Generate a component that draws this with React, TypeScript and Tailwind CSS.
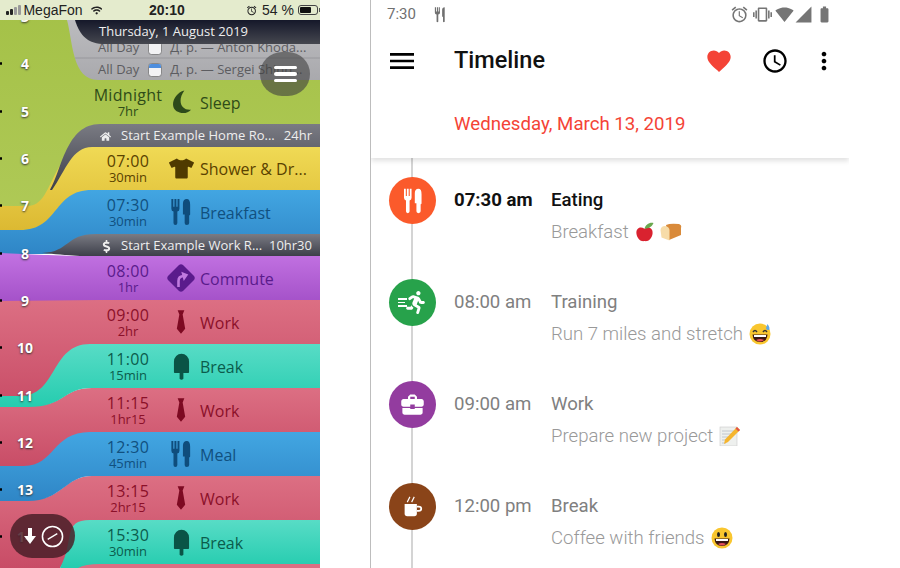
import React from "react";
import { FaDollarSign, FaHome, FaTshirt, FaWifi, FaRunning } from "react-icons/fa";
import { MdAlarm, MdBusinessCenter, MdFavorite, MdMenu, MdMoreVert, MdOutlineAccessTime, MdSignalCellular4Bar, MdSignalWifi4Bar, MdBatteryFull, MdVibration } from "react-icons/md";

const grads: [string, string, string][] = [
  ["green", "#a4c147", "#b0ca58"],
  ["yellow", "#f0da55", "#dcb932"],
  ["blue", "#42a6e2", "#2f86c6"],
  ["purple", "#c272e2", "#a552c9"],
  ["red", "#dc6f83", "#c84c66"],
  ["teal", "#58dcc6", "#25ccaf"],
  ["dark", "#7a7b83", "#3d3f4a"],
  ["black", "#15182a", "#45474f"],
  ["grey", "#bcbcbf", "#a9a9ad"],
];

function Waves() {
  return (
    <svg viewBox="0 0 320 568" className="absolute inset-0 w-[320px] h-[568px]">
      <defs>
        {grads.map(([id, a, b]) => (
          <linearGradient key={id} id={id} x1="0" y1="0" x2="0" y2="1">
            <stop offset="0" stopColor={a} />
            <stop offset="1" stopColor={b} />
          </linearGradient>
        ))}
      </defs>
      <rect width="320" height="240" fill="url(#green)" />
      {/* all-day pills */}
      <path d="M67 20 C73 42 72 80 98 80 H320 V20 Z" fill="url(#grey)" />
      <path d="M75 58 H320" stroke="#98989c" strokeWidth="1" />
      <path d="M75 20 C80 36 88 44 105 44 H320 V20 Z" fill="url(#black)" />
      {/* yellow */}
      <path d="M0 206 H28 C55 206 50 146 92 146 H320 V192 H90 C60 192 60 230 20 230 H0 Z" fill="url(#yellow)" />
      {/* home header */}
      <path d="M50 190 C62 170 66 124 100 124 H320 V147 H92 C72 147 66 170 52 190 Z" fill="url(#dark)" />
      {/* blue */}
      <path d="M0 230 H20 C60 230 52 190 92 190 H320 V236 H100 C70 236 70 254 42 254 H0 Z" fill="url(#blue)" />
      {/* work header */}
      <path d="M42 253 C70 252 65 234 96 234 H320 V256 H80 C65 255 55 254 42 253 Z" fill="url(#dark)" />
      {/* red blocks */}
      <path d="M0 300 H320 V345 H90 L90 388 H60 L40 408 H0 Z" fill="url(#red)" />
      <path d="M0 406 H30 C66 406 62 388 92 388 H320 V433 H90 L60 468 H0 Z" fill="url(#red)" />
      <path d="M0 500 H30 C62 500 65 476 92 476 H320 V521 H90 L60 568 H0 Z" fill="url(#red)" />
      {/* purple */}
      <path d="M0 253 C30 254 60 256 80 256 H320 V300 H100 L0 301 Z" fill="url(#purple)" />
      {/* teal 1 */}
      <path d="M0 396 H20 C58 396 50 344 90 344 H320 V388 H92 C62 388 66 407 28 407 H0 Z" fill="url(#teal)" />
      {/* blue 2 */}
      <path d="M0 466 H24 C55 466 52 432 90 432 H320 V476 H92 C65 476 62 501 28 501 H0 Z" fill="url(#blue)" />
      {/* teal 2 */}
      <path d="M60 568 C75 540 62 520 90 520 H320 V568 H60 Z" fill="url(#teal)" />
      <path d="M78 568 Q85 564 100 564 H320 V568 Z" fill="#dc6f83" />
    </svg>
  );
}

function Cutlery({ className }: { className: string }) {
  return (
    <svg viewBox="0 0 20 27" className={className} fill="currentColor">
      <path d="M0 0 H2 V8 H3.200 V0 H5.200 V8 H6.400 V0 H8.400 V10 Q8.400 12.500 6.200 13 V25 Q6.200 27 4.200 27 Q2.200 27 2.200 25 V13 Q0 12.500 0 10 Z" />
      <path d="M12 16 V5 Q12 0 16 0 Q19.500 0 19.500 6 V16 Q19.500 17 18.500 17 V25 Q18.500 27 16 27 Q13.800 27 13.800 25 V16 Z" />
    </svg>
  );
}
function Tie({ color }: { color: string }) {
  return (
    <svg viewBox="0 0 12 28" className="w-[10px] h-[28px]" fill={color}>
      <path d="M2 0 H10 L8 5 L11 22 L6 28 L1 22 L4 5 Z" />
    </svg>
  );
}
function Pop({ color }: { color: string }) {
  return (
    <svg viewBox="0 0 18 28" className="w-[17px] h-[27px]" fill={color}>
      <path d="M1 9 A8 8.500 0 0 1 17 9 V20 Q17 21 15 21 H11 V27 Q9 29 7 27 V21 H3 Q1 21 1 20 Z" />
    </svg>
  );
}
function Moon() {
  return (
    <svg viewBox="0 0 22 24" className="w-[21px] h-[24px]" fill="#2d4a1a">
      <path d="M14 0 C2 3 -3 20 9 23 C14 24.500 18 23 21 20 C11 21 6 11 14 0 Z" />
    </svg>
  );
}
function Diamond() {
  return (
    <svg viewBox="0 0 28 28" className="w-[28px] h-[28px]">
      <path d="M12 1 Q14 -0.500 16 1 L27 12 Q28.500 14 27 16 L16 27 Q14 28.500 12 27 L1 16 Q-0.500 14 1 12 Z" fill="#5a1b8c" />
      <path d="M11.500 23 V17 Q11.500 12 17 12" fill="none" stroke="#c07adf" strokeWidth="2.600" />
      <path d="M15.500 7 L21.500 11.500 L15.500 16.500 Z" fill="#c07adf" transform="rotate(-15 18 12)" />
    </svg>
  );
}

function Row({ time, dur, icon, label, color }: { time: string; dur: string; icon: React.ReactNode; label: string; color: string }) {
  return (
    <div className="h-[44px] flex items-center pl-[88px] shrink-0" style={{ color }}>
      <div className="w-[80px] text-center">
        <div className="text-[16px] leading-[18px] tracking-[0.3px]">{time}</div>
        <div className="text-[13px] leading-[15px]">{dur}</div>
      </div>
      <div className="w-[28px] flex justify-center -ml-[1px] mr-[5px]">{icon}</div>
      <div className="text-[16px] pt-[2px] whitespace-nowrap">{label}</div>
    </div>
  );
}

function Band({ icon, title, right }: { icon: React.ReactNode; title: string; right: string }) {
  return (
    <div className="h-[22px] shrink-0 flex items-center text-[13px] text-[#eeeeee] pl-[100px] pr-[8px] pt-[2px] whitespace-nowrap">
      <div className="w-[21px]">{icon}</div>
      <div className="flex-1">{title}</div>
      <div>{right}</div>
    </div>
  );
}

function Cal({ on }: { on: boolean }) {
  return (
    <svg viewBox="0 0 14 14" className="w-[14px] h-[14px] shrink-0">
      <rect x="0.500" y="0.500" width="13" height="13" rx="3" fill="#f2f2f4" stroke="#555" strokeWidth="0.600" />
      <path d="M1 5 V3 Q1 1 3 1 H11 Q13 1 13 3 V5 Z" fill={on ? "#4e8ede" : "#f2f2f4"} />
    </svg>
  );
}

function LeftPhone() {
  const hours = ["3", "4", "5", "6", "7", "8", "9", "10", "11", "12", "13", "14"];
  return (
    <div className="relative w-[320px] h-[568px] overflow-hidden shrink-0 font-['Open_Sans',sans-serif]">
      <Waves />
      <div className="relative flex flex-col h-full">
        <div className="h-[20px] shrink-0 bg-[#e4ebcd] relative z-20 flex items-center text-[14px] text-[#222] pl-[6px] font-['Liberation_Sans',sans-serif] whitespace-nowrap">
          <div className="flex items-end gap-[1px] w-[20px]">
            <span className="w-[3px] h-[4px] rounded-[1px] bg-[#222]" />
            <span className="w-[3px] h-[6px] rounded-[1px] bg-[#222]" />
            <span className="w-[3px] h-[8px] rounded-[1px] bg-[#999]" />
            <span className="w-[3px] h-[10px] rounded-[1px] bg-[#999]" />
          </div>
          <span>MegaFon</span>
          <FaWifi className="ml-[8px] text-[13px]" />
          <span className="ml-[47px] font-bold">20:10</span>
          <MdAlarm className="ml-[61px] text-[13px]" />
          <span className="ml-[5px]">54 %</span>
          <div className="ml-[4px] w-[22px] h-[10px] border border-[#444] rounded-[3px] p-[1px]">
            <div className="w-[11px] h-full bg-[#111] rounded-[1px]" />
          </div>
          <span className="ml-[1px] w-[1.500px] h-[4px] bg-[#555]" />
        </div>
        <div className="h-[24px] shrink-0 flex items-center pl-[99px] text-[13px] text-[#eeeeee] whitespace-nowrap">Thursday, 1 August 2019</div>
        <div className="h-[14px] shrink-0 overflow-hidden pl-[98px] text-[13px] text-[#5c5c60] whitespace-nowrap">
          <div className="flex items-center gap-[8.500px] h-[16px] -mt-[4px]">
            <span>All Day</span><Cal on={false} /><span>Д. р. — Anton Khoda...</span>
          </div>
        </div>
        <div className="h-[22px] shrink-0 flex items-center pl-[98px] pt-[2px] text-[13px] text-[#5c5c60] whitespace-nowrap gap-[8.500px]">
          <span>All Day</span><Cal on /><span>Д. р. — Sergei Shinn...</span>
        </div>
        <Row time="Midnight" dur="7hr" color="#2f4c18" icon={<Moon />} label="Sleep" />
        <Band icon={<FaHome className="text-[11px]" />} title="Start Example Home Ro..." right="24hr" />
        <Row time="07:00" dur="30min" color="#5a4200" icon={<FaTshirt className="text-[25px] text-[#4f3a00]" />} label="Shower & Dr..." />
        <Row time="07:30" dur="30min" color="#11507f" icon={<Cutlery className="w-[20px] h-[26px] text-[#0f4d7c]" />} label="Breakfast" />
        <Band icon={<FaDollarSign className="text-[13px]" />} title="Start Example Work R..." right="10hr30" />
        <Row time="08:00" dur="1hr" color="#5a1b8c" icon={<Diamond />} label="Commute" />
        <Row time="09:00" dur="2hr" color="#8b1029" icon={<Tie color="#7d0a22" />} label="Work" />
        <Row time="11:00" dur="15min" color="#0b5c4c" icon={<Pop color="#0a5446" />} label="Break" />
        <Row time="11:15" dur="1hr15" color="#8b1029" icon={<Tie color="#7d0a22" />} label="Work" />
        <Row time="12:30" dur="45min" color="#11507f" icon={<Cutlery className="w-[20px] h-[26px] text-[#0f4d7c]" />} label="Meal" />
        <Row time="13:15" dur="2hr15" color="#8b1029" icon={<Tie color="#7d0a22" />} label="Work" />
        <Row time="15:30" dur="30min" color="#0b5c4c" icon={<Pop color="#0a5446" />} label="Break" />
      </div>
      {/* hour ruler */}
      <div className="absolute left-0 top-[-7px] w-[36px] flex flex-col z-10">
        {hours.map((n) => (
          <div key={n} className="h-[47.300px] flex items-center relative">
            <span className="absolute left-0 w-[2px] h-[3px] rounded-full bg-black" />
            <span className="w-full pl-[14px] text-center text-[14px] font-bold text-white [text-shadow:0_1px_2px_#333]">{n}</span>
          </div>
        ))}
      </div>
      <div className="absolute z-10 left-[260px] top-[52px] w-[50px] h-[44px] rounded-full bg-[#3f3f3f]/60 flex flex-col items-center justify-center gap-[3px]">
        <span className="w-[23px] h-[3.500px] rounded-full bg-white" />
        <span className="w-[23px] h-[3.500px] rounded-full bg-white" />
        <span className="w-[23px] h-[3.500px] rounded-full bg-white" />
      </div>
      <div className="absolute z-10 left-[10px] top-[514px] w-[65px] h-[44px] rounded-[22px] bg-[#4a1e28]/85 flex items-center pl-[14px] gap-[5px]">
        <svg viewBox="0 0 12 16" className="w-[12px] h-[16px]" fill="white"><path d="M4 0 H8 V8 H12 L6 16 L0 8 H4 Z" /></svg>
        <svg viewBox="0 0 24 24" className="w-[23px] h-[23px]" fill="none" stroke="white"><circle cx="12" cy="12" r="10.500" strokeWidth="1.600" /><path d="M7 15 L17 9" strokeWidth="1.400" /></svg>
      </div>
    </div>
  );
}

function Apple() {
  return (
    <svg viewBox="0 0 20 21" className="w-[19px] h-[20px]">
      <path d="M10 7 C5 4 1 7 1.500 12 C2 17 6 21 10 20 C14 21 18 17 18.500 12 C19 7 15 4 10 7Z" fill="#d9222f" />
      <path d="M10 7 C11 3 15 0 19.500 1 C18 5 14 7 10 7Z" fill="#6aa84f" />
    </svg>
  );
}
function Bread() {
  return (
    <svg viewBox="0 0 22 18" className="w-[22px] h-[18px]">
      <path d="M6 2 Q10 0 19 1 Q22 2 21 5 V12 L9 17 Z" fill="#d98a3a" />
      <path d="M0.500 7 Q1 3 5 3 Q9 3.500 9.500 7 V17.500 L1.500 14.500 Z" fill="#f7dca8" />
    </svg>
  );
}
function Face({ sweat }: { sweat?: boolean }) {
  return (
    <svg viewBox="0 0 22 22" className="w-[22px] h-[22px]">
      <circle cx="11" cy="11" r="10.500" fill="#f9c62f" />
      {sweat ? (
        <path d="M4 9 Q6 6 8 9 M14 9 Q16 6 18 9" stroke="#333" strokeWidth="1.400" fill="none" />
      ) : (
        <>
          <ellipse cx="7.500" cy="7.500" rx="1.500" ry="2.500" fill="#222" />
          <ellipse cx="14.500" cy="7.500" rx="1.500" ry="2.500" fill="#222" />
        </>
      )}
      <path d="M3.500 11.500 H18.500 Q18 19 11 19 Q4 19 3.500 11.500Z" fill="#3a1712" />
      <path d="M5 12 H17 V14 H5Z" fill="#fff" />
      <path d="M7 17 Q11 15 15 17 Q11 20 7 17Z" fill="#e8505b" />
      {sweat && <path d="M18.500 1 Q21.500 5 20 7 Q17 7.500 17 5 Z" fill="#5fa8e8" />}
    </svg>
  );
}
function Memo() {
  return (
    <svg viewBox="0 0 22 20" className="w-[22px] h-[20px]">
      <rect x="1" y="1" width="17" height="19" fill="#eef0ee" stroke="#c9c9c9" strokeWidth="0.600" />
      <path d="M3 5 H16 M3 8 H16 M3 11 H12 M3 14 H9 M3 17 H7" stroke="#b5bdc5" strokeWidth="0.800" />
      <path d="M18 1 L21 4 L9 16 L5 18 L6 13.500 Z" fill="#f5b52e" />
      <path d="M18 1 L21 4 L19.500 5.500 L16.500 2.500 Z" fill="#e0524a" />
    </svg>
  );
}
function Runner() {
  return (
    <div className="flex items-center text-white">
      <div className="flex flex-col gap-[2px] mr-[-3px]">
        <span className="w-[9px] h-[1.500px] bg-white" />
        <span className="w-[7px] h-[1.500px] bg-white" />
        <span className="w-[9px] h-[1.500px] bg-white" />
      </div>
      <FaRunning className="text-[23px]" />
    </div>
  );
}
function Cup() {
  return (
    <svg viewBox="0 0 24 24" className="w-[21px] h-[23px]" fill="white">
      <path d="M3 9 H17 V20 Q17 23 14 23 H6 Q3 23 3 20 Z" />
      <path d="M17 11 H19 Q23 11 23 14.500 Q23 18 19 18 H17 V16 H19 Q21 16 21 14.500 Q21 13 19 13 H17 Z" />
      <path d="M6 7 L9 1 M11 7 L14 1" stroke="white" strokeWidth="1.300" />
    </svg>
  );
}

function Item({ bg, icon, time, title, desc, emoji, active }: { bg: string; icon: React.ReactNode; time: string; title: string; desc: string; emoji: React.ReactNode; active?: boolean }) {
  return (
    <div className="h-[102px] flex items-start pl-[18px] shrink-0">
      <div className={`relative w-[47px] h-[47px] rounded-full flex items-center justify-center shrink-0 ${bg}`}>{icon}</div>
      <div className="flex-1 ml-[18px]">
        <div className={`flex text-[18.600px] leading-[24px] mt-[11px] ${active ? "text-[#111] font-bold" : "text-[#808080]"}`}>
          <span className="w-[97px]">{time}</span>
          <span className={active ? "font-medium" : ""}>{title}</span>
        </div>
        <div className="flex items-center gap-[6px] ml-[97px] mt-[8px] text-[18.600px] leading-[24px] font-light text-[#999999] whitespace-nowrap">
          <span>{desc}</span>
          {emoji}
        </div>
      </div>
    </div>
  );
}

function RightPhone() {
  return (
    <div className="w-[479px] h-[568px] border-l border-[#bdbdbd] font-['Roboto',sans-serif] flex flex-col shrink-0 overflow-hidden">
      <div className="h-[29px] shrink-0 flex items-center pl-[16px] pr-[15px] text-[15px] text-[#707070]">
        <span>7:30</span>
        <svg viewBox="0 0 14 18" className="w-[12px] h-[18px] ml-[18px]" fill="#707070">
          <path d="M1 0 V6 Q1 8 3 8.500 V17 Q4 18 5 17 V8.500 Q7 8 7 6 V0 H6 V5 H5 V0 H3.500 V5 H2.500 V0 Z" />
          <path d="M9.500 11 V3 Q9.500 0 12.500 0 V17 Q11.500 18 10.500 17 V11 Z" />
        </svg>
        <div className="ml-auto flex items-center gap-[3px] text-[19px] text-[#757575]">
          <MdAlarm />
          <MdVibration className="ml-[1px]" />
          <MdSignalWifi4Bar />
          <MdSignalCellular4Bar className="-ml-[3px]" />
          <MdBatteryFull className="-ml-[1px]" />
        </div>
      </div>
      <div className="h-[63px] shrink-0 relative z-20 bg-white flex items-center pl-[16px] pr-[11px]">
        <MdMenu className="text-[32px] text-black -ml-[1px]" />
        <span className="ml-[36px] pt-[1px] text-[23.500px] font-medium text-[#111]">Timeline</span>
        <MdFavorite className="ml-auto text-[28px] text-[#f44336]" />
        <MdOutlineAccessTime className="ml-[28px] text-[28px] text-black" />
        <MdMoreVert className="ml-[21px] text-[28px] text-black" />
      </div>
      <div className="h-[66px] shrink-0 flex items-start pl-[83px] pt-[20px] text-[18.650px] leading-[24px] text-[#f44336] relative z-10 bg-white shadow-[0_3px_5px_rgba(0,0,0,0.12)]">
        Wednesday, March 13, 2019
      </div>
      <div className="relative flex-1 pt-[19px] flex flex-col">
        <div className="absolute left-[40px] top-0 bottom-0 w-[2px] bg-[#d4d4d4]" />
        <Item active bg="bg-[#fb5a2b]" icon={<Cutlery className="w-[18px] h-[26px] text-white" />} time="07:30 am" title="Eating" desc="Breakfast" emoji={<><Apple /><Bread /></>} />
        <Item bg="bg-[#27a24b]" icon={<Runner />} time="08:00 am" title="Training" desc="Run 7 miles and stretch" emoji={<Face sweat />} />
        <Item bg="bg-[#933c9f]" icon={<MdBusinessCenter className="text-[27px] text-white" />} time="09:00 am" title="Work" desc="Prepare new project" emoji={<Memo />} />
        <Item bg="bg-[#8a4419]" icon={<Cup />} time="12:00 pm" title="Break" desc="Coffee with friends" emoji={<Face />} />
      </div>
    </div>
  );
}

export default function App() {
  return (
    <div className="w-[900px] h-[568px] bg-white flex overflow-hidden">
      <LeftPhone />
      <div className="w-[50px] shrink-0" />
      <RightPhone />
    </div>
  );
}
